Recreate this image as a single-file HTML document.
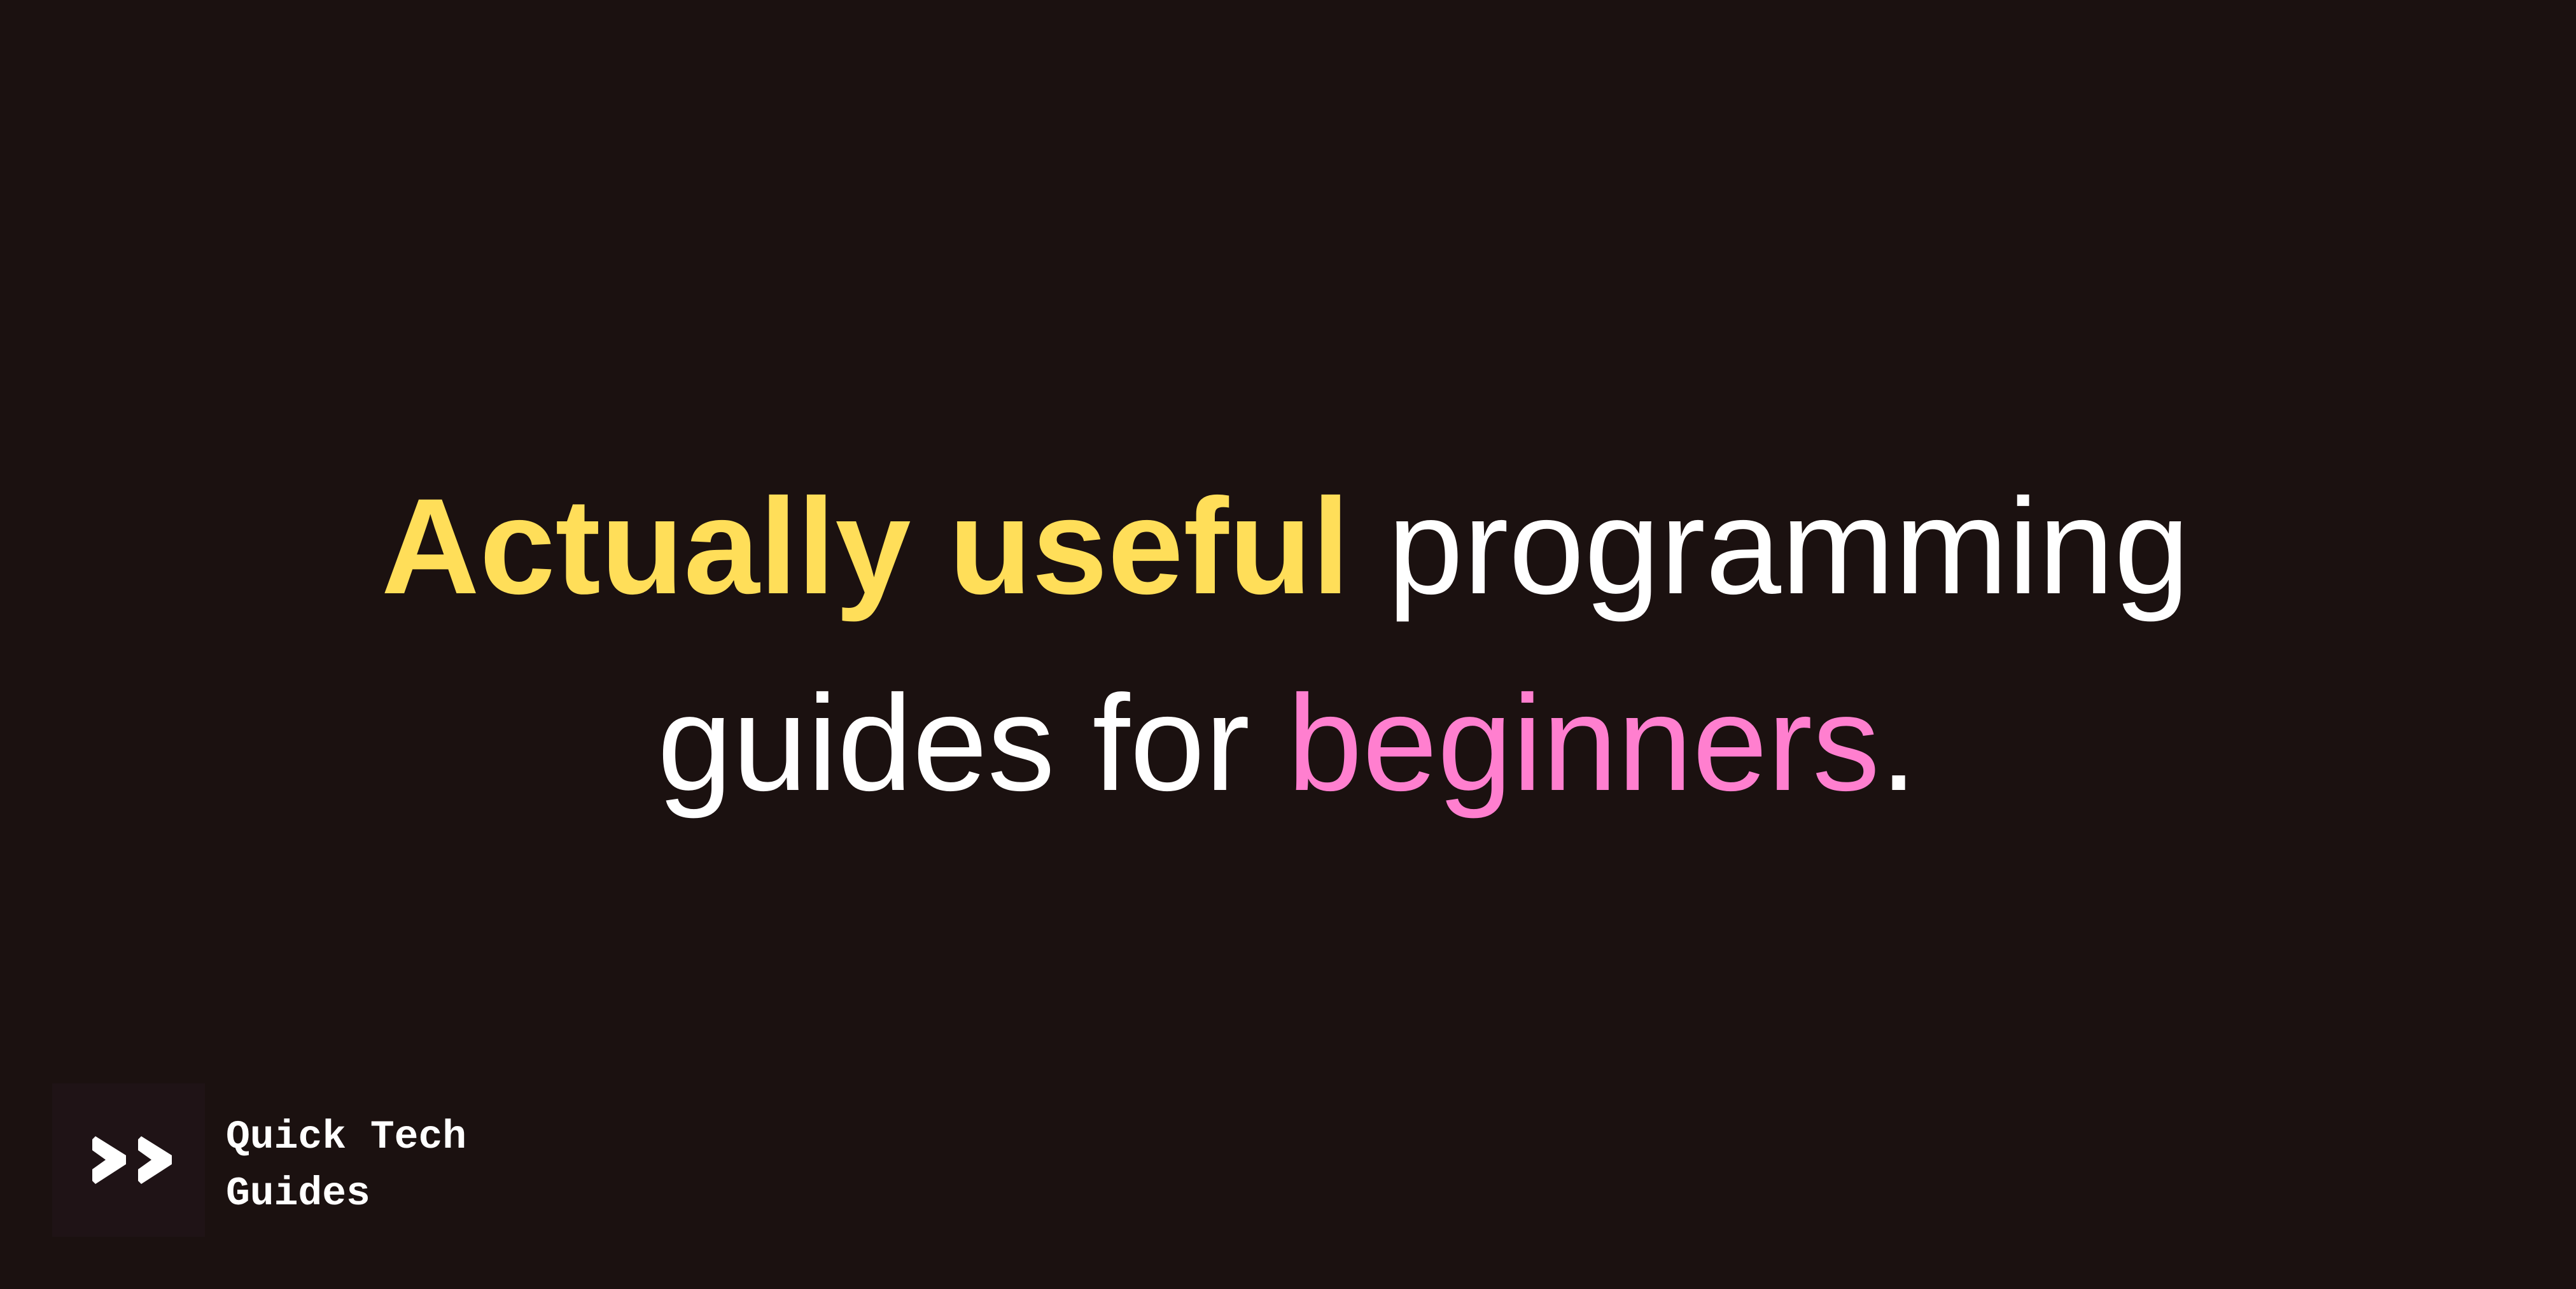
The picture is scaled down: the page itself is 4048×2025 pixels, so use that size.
<!DOCTYPE html>
<html><head><style>
html,body{margin:0;padding:0;}
body{width:4048px;height:2025px;background:#1b1110;position:relative;overflow:hidden;}
.l{position:absolute;white-space:nowrap;font-family:"Liberation Sans",sans-serif;font-size:214px;color:#fff;line-height:1;}
.y{color:#ffde59;font-weight:bold;}
.p{color:#ff7fcf;}
.box{position:absolute;left:82px;top:1702px;width:240px;height:241px;background:#1f1316;}
.t{position:absolute;left:355px;font-family:"Liberation Mono",monospace;font-weight:bold;font-size:63px;color:#fff;line-height:1;white-space:nowrap;}
</style></head><body>
<div class="l" id="a" style="left:599px;top:752px;transform-origin:0 0;"><span class="y">Actually useful</span> programming</div>
<div class="l" id="b" style="left:1033px;top:1061px;transform-origin:0 0;">guides for <span class="p">beginners</span>.</div>
<div class="box"></div>
<svg style="position:absolute;left:0;top:0" width="4048" height="2025">
<polygon fill="#fff" points="145,1790 150,1785 198,1815 198,1829 150,1860 145,1855 145,1837 166,1822 145,1807"/>
<polygon fill="#fff" points="217,1790 222,1785 270,1815 270,1829 222,1860 217,1855 217,1837 238,1822 217,1807"/>
</svg>
<div class="t" style="top:1755px">Quick Tech</div>
<div class="t" style="top:1844px">Guides</div>
<script>
function fit(id,w){var e=document.getElementById(id);var r=e.getBoundingClientRect().width;e.style.transform='scaleX('+(w/r)+')';}
fit('a',2842);fit('b',1980);
</script>
</body></html>
